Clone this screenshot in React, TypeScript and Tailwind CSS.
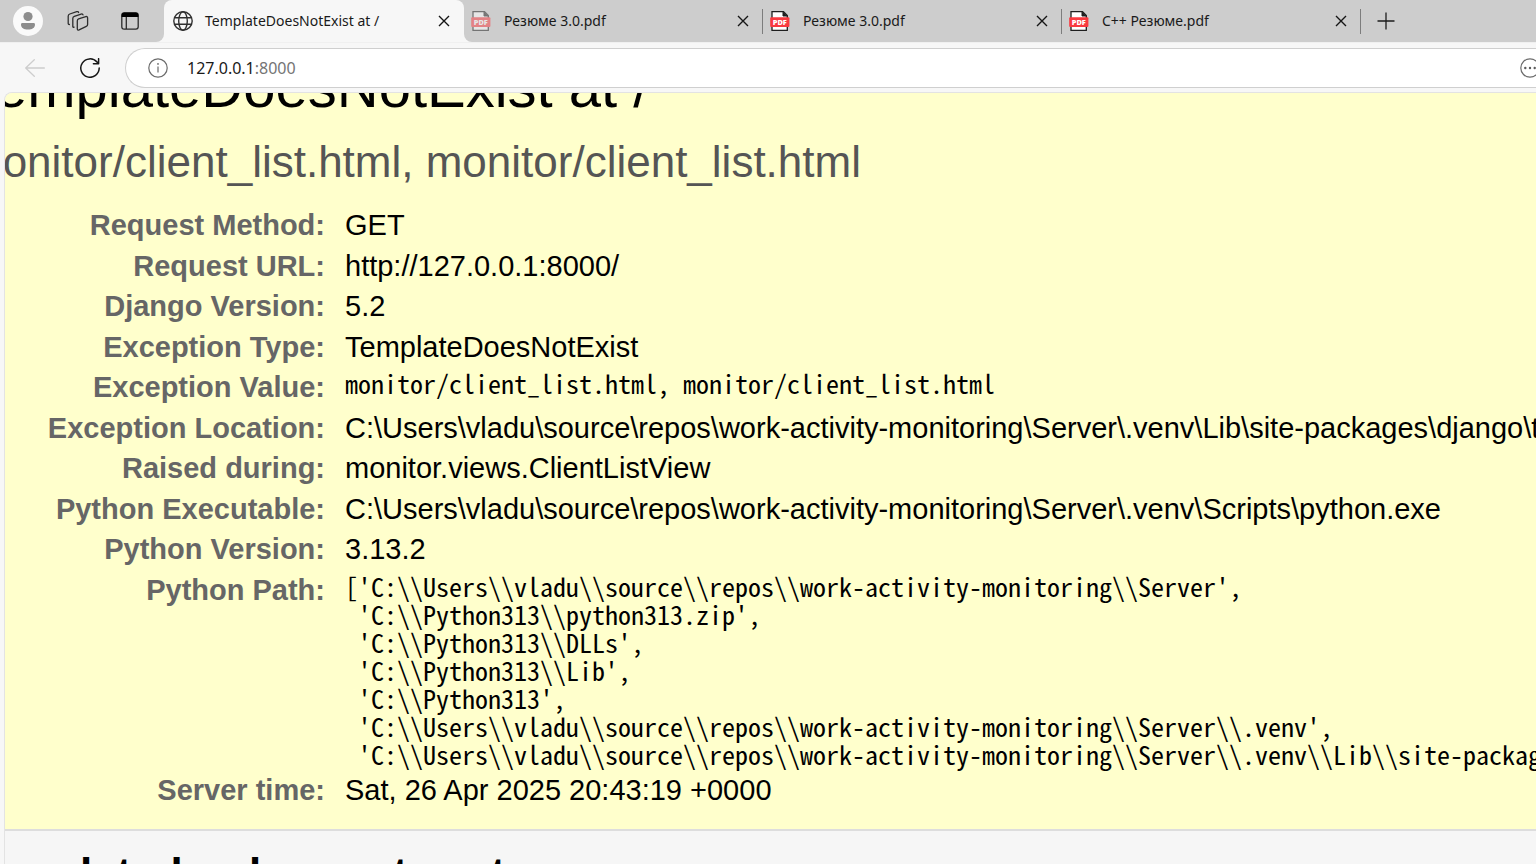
import type { ReactNode } from "react";

type IconProps = { className?: string };

function AvatarIcon() {
  return (
    <svg viewBox="0 0 30 30" className="size-[30px]" aria-hidden="true">
      <circle cx="15" cy="15" r="15" fill="#fafafa" />
      <circle cx="15" cy="10.5" r="4.6" fill="#8d8d8d" />
      <path d="M8 18.4q0-1.4 1.4-1.4h11.2q1.4 0 1.4 1.4c0 3.4-3 5.2-7 5.2s-7-1.8-7-5.2Z" fill="#8d8d8d" />
    </svg>
  );
}

function WorkspacesIcon() {
  return (
    <svg viewBox="0 0 22 22" className="size-[22px]" fill="none" stroke="#2e2e2e" strokeWidth="1.3" strokeLinecap="round" strokeLinejoin="round" aria-hidden="true">
      <path d="M11.6 8.9 18.8 6.6q1.8-.5 1.8 1.3v6.6q0 1.4-1.3 1.9l-7.2 3.5q-1.8.8-1.8-1.1V11q0-1.6 1.3-2.1Z" />
      <path d="M16 4.9q-.4-1.3-1.9-.8L7.3 6.4Q5.8 6.9 5.8 8.4v8q0 1 1.3.8" />
      <path d="M11.6 2.5q-.4-1.3-1.9-.8L2.8 4Q1.2 4.6 1.2 6.2v7.2q0 1.1 1.2 1.1" />
    </svg>
  );
}

function TabActionsIcon() {
  return (
    <svg viewBox="0 0 18 18" className="size-[18px]" fill="none" aria-hidden="true">
      <rect x=".8" y=".8" width="16.4" height="16.4" rx="2.4" stroke="#2b2b2b" strokeWidth="1.3" />
      <path d="M.6 5V3Q.6.5 3 .5h12q2.4 0 2.4 2.5v2Z" fill="#000" />
      <path d="M5.3 5v12" stroke="#2b2b2b" strokeWidth="1.3" />
    </svg>
  );
}

function GlobeIcon() {
  return (
    <svg viewBox="0 0 20 20" className="size-5 shrink-0" fill="none" stroke="#303030" strokeWidth="1.4" aria-hidden="true">
      <circle cx="10" cy="10" r="9.2" />
      <ellipse cx="10" cy="10" rx="4.3" ry="9.2" />
      <path d="M1.6 6.7h16.8M1.6 13.3h16.8" />
    </svg>
  );
}

function PdfIcon({ className = "" }: IconProps) {
  return (
    <svg viewBox="0 0 20 20" className={`size-5 shrink-0 ${className}`} aria-hidden="true">
      <path d="M2 .7h11.5L17.3 4.5v14.9H2Z" fill="#fff" stroke="#1e1e1e" strokeWidth="1.3" />
      <path d="M13 .7v4.3h4.4" fill="#1e1e1e" stroke="#1e1e1e" strokeWidth="1" />
      <rect x=".2" y="6.2" width="19.2" height="9.8" rx="1" fill="#f9393f" />
      <text x="9.8" y="13.8" textAnchor="middle" fontFamily="Open Sans, sans-serif" fontWeight="800" fontSize="7.4" fill="#fff">PDF</text>
    </svg>
  );
}

function CloseIcon() {
  return (
    <svg viewBox="0 0 12 12" className="size-3" stroke="#151515" strokeWidth="1.4" aria-hidden="true">
      <path d="m1 1 10 10M11 1 1 11" />
    </svg>
  );
}

function PlusIcon() {
  return (
    <svg viewBox="0 0 18 18" className="size-[18px]" stroke="#1c1c1c" strokeWidth="1.3" aria-hidden="true">
      <path d="M9 .5v17M.5 9h17" />
    </svg>
  );
}

function BackIcon() {
  return (
    <svg viewBox="0 0 20 20" className="size-5" fill="none" stroke="#cdcdcd" strokeWidth="1.3" strokeLinecap="round" strokeLinejoin="round" aria-hidden="true">
      <path d="M19.4 10H.8M9.3 1.8.7 10l8.6 8.2" />
    </svg>
  );
}

function ReloadIcon() {
  return (
    <svg viewBox="0 0 20 20" className="size-5" fill="none" stroke="#161616" strokeWidth="1.5" strokeLinecap="round" strokeLinejoin="round" aria-hidden="true">
      <path d="M19.2 10A9.2 9.2 0 1 1 17 4.1l1.3 1.5M18.6.7v5.1h-5.2" />
    </svg>
  );
}

function InfoIcon() {
  return (
    <svg viewBox="0 0 20 20" className="size-5 shrink-0" fill="none" stroke="#6b6b6b" strokeWidth="1.2" aria-hidden="true">
      <circle cx="10" cy="10" r="9.2" />
      <path d="M10 8.4v6.2" />
      <circle cx="10" cy="5.9" r=".9" fill="#6b6b6b" stroke="none" />
    </svg>
  );
}

function MoreIcon() {
  return (
    <svg viewBox="0 0 20 20" className="size-5" fill="none" stroke="#6b6b6b" strokeWidth="1.2" aria-hidden="true">
      <circle cx="10" cy="10" r="9.2" />
      <g fill="#5c5c5c" stroke="none">
        <circle cx="5.3" cy="10" r="1.2" />
        <circle cx="10" cy="10" r="1.2" />
        <circle cx="14.7" cy="10" r="1.2" />
      </g>
    </svg>
  );
}

function Tab({ title, faded }: { title: string; faded?: boolean }) {
  return (
    <div className="flex h-[42px] w-[299px] shrink-0 items-center">
      <button type="button" className="flex flex-1 items-center gap-[13px] pl-[7px]">
        <PdfIcon className={faded ? "opacity-50" : ""} />
        <span className="text-sm">{title}</span>
      </button>
      <button type="button" aria-label="Close tab" className="mr-[13px]">
        <CloseIcon />
      </button>
      <span className={faded === undefined || faded ? "h-[25px] w-px bg-[#7d7d7d]" : "w-px"} />
    </div>
  );
}

function Row({ label, code, children }: { label: string; code?: boolean; children: ReactNode }) {
  return (
    <tr className="align-top odd:h-[41px] even:h-10">
      <th scope="row" className="w-[359px] min-w-[359px] py-1 text-right leading-8 font-bold text-[#666666]">
        {label}
      </th>
      {code ? (
        <td className="py-0.5 pl-5">
          <pre className="font-['Noto_Sans_Mono_CJK_SC','Liberation_Mono',monospace] text-[26px] leading-7">{children}</pre>
        </td>
      ) : (
        <td className="py-1 pl-5 leading-8">{children}</td>
      )}
    </tr>
  );
}

const pythonPath = [
  "['C:\\\\Users\\\\vladu\\\\source\\\\repos\\\\work-activity-monitoring\\\\Server',",
  " 'C:\\\\Python313\\\\python313.zip',",
  " 'C:\\\\Python313\\\\DLLs',",
  " 'C:\\\\Python313\\\\Lib',",
  " 'C:\\\\Python313',",
  " 'C:\\\\Users\\\\vladu\\\\source\\\\repos\\\\work-activity-monitoring\\\\Server\\\\.venv',",
  " 'C:\\\\Users\\\\vladu\\\\source\\\\repos\\\\work-activity-monitoring\\\\Server\\\\.venv\\\\Lib\\\\site-packages']",
].join("\n");

export default function App() {
  return (
    <div className="flex h-screen flex-col overflow-hidden bg-[#f7f7f7] font-['Noto_Sans',sans-serif] text-[#1a1a1a]">
      <header>
        <div className="flex border-b border-[#f0f0f0]">
          <div className="flex h-[42px] w-[164px] shrink-0 items-center rounded-br-lg bg-[#cdcdcd] pl-[13px]">
            <button type="button" aria-label="Profile">
              <AvatarIcon />
            </button>
            <button type="button" aria-label="Workspaces" className="ml-6">
              <WorkspacesIcon />
            </button>
            <button type="button" aria-label="Tab actions" className="ml-8">
              <TabActionsIcon />
            </button>
          </div>
          <div className="w-[300px] shrink-0 bg-[#cdcdcd]">
            <div className="flex h-[42px] items-center rounded-t-lg bg-[#f7f7f7]">
              <button type="button" className="flex flex-1 items-center gap-3 pl-[9px]">
                <GlobeIcon />
                <span className="text-sm">TemplateDoesNotExist at /</span>
              </button>
              <button type="button" aria-label="Close tab" className="mr-[14px]">
                <CloseIcon />
              </button>
            </div>
          </div>
          <div className="flex h-[42px] min-w-0 flex-1 items-center rounded-bl-lg bg-[#cdcdcd]">
            <Tab title="Резюме 3.0.pdf" faded />
            <Tab title="Резюме 3.0.pdf" />
            <Tab title="C++ Резюме.pdf" />
            <button type="button" aria-label="New tab" className="ml-4">
              <PlusIcon />
            </button>
          </div>
        </div>

        <div className="-mr-1 flex items-center pt-[5px] pb-1 pl-[25px]">
          <button type="button" aria-label="Back" disabled>
            <BackIcon />
          </button>
          <button type="button" aria-label="Reload" className="ml-[35px]">
            <ReloadIcon />
          </button>
          <div className="ml-[25px] flex h-10 flex-1 items-center rounded-l-full border border-r-0 border-[#cfcfcf] bg-white pl-[22px]">
            <InfoIcon />
            <a href="http://127.0.0.1:8000/" className="ml-[19px] flex-1 text-base">
              127.0.0.1<span className="text-[#757575]">:8000</span>
            </a>
            <button type="button" aria-label="More">
              <MoreIcon />
            </button>
          </div>
        </div>
      </header>

      <main className="ml-1 min-h-0 flex-1 overflow-hidden rounded-tl-lg border-t border-l border-[#e3e3e3] bg-[#f6f6f6] font-['Liberation_Sans',sans-serif] text-[29px] whitespace-nowrap text-black">
        <section className="border-b-2 border-[#dddddd] bg-[#ffffcc] pb-[18px]">
          <div className="-mt-[38px] -ml-[39px]">
            <h1 className="text-[58px] leading-[64px]">TemplateDoesNotExist at /</h1>
            <p className="mt-[18px] text-[44px] leading-[50px] text-[#555555]">
              monitor/client_list.html, monitor/client_list.html
            </p>
            <table className="mt-[18px] border-collapse">
              <tbody>
                <Row label="Request Method:">GET</Row>
                <Row label="Request URL:">http://127.0.0.1:8000/</Row>
                <Row label="Django Version:">5.2</Row>
                <Row label="Exception Type:">TemplateDoesNotExist</Row>
                <Row label="Exception Value:" code>monitor/client_list.html, monitor/client_list.html</Row>
                <Row label="Exception Location:">
                  {"C:\\Users\\vladu\\source\\repos\\work-activity-monitoring\\Server\\.venv\\Lib\\site-packages\\django\\template"}
                </Row>
                <Row label="Raised during:">monitor.views.ClientListView</Row>
                <Row label="Python Executable:">
                  {"C:\\Users\\vladu\\source\\repos\\work-activity-monitoring\\Server\\.venv\\Scripts\\python.exe"}
                </Row>
                <Row label="Python Version:">3.13.2</Row>
                <Row label="Python Path:" code>{pythonPath}</Row>
                <Row label="Server time:">Sat, 26 Apr 2025 20:43:19 +0000</Row>
              </tbody>
            </table>
          </div>
        </section>
        <section className="-ml-[39px] pt-[18px]">
          <h2 className="text-[44px] leading-[50px] font-bold">Template-loader postmortem</h2>
        </section>
      </main>
    </div>
  );
}
